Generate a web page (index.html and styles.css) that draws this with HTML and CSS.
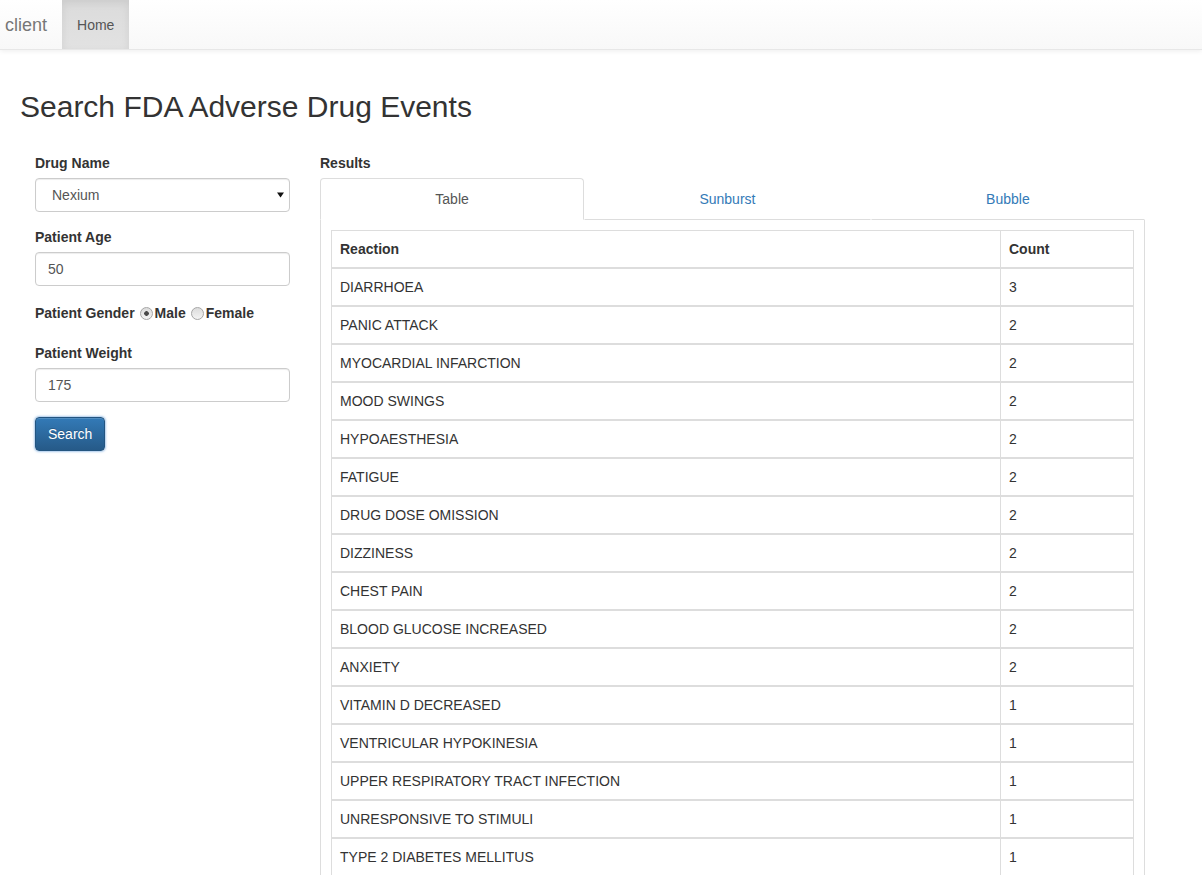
FILE: index.html
```html
<!DOCTYPE html>
<html lang="en">
<head>
<meta charset="utf-8">
<title>Search FDA Adverse Drug Events</title>
<link rel="stylesheet" href="styles.css">
</head>
<body>
<nav class="navbar">
  <span class="brand">client</span>
  <a class="nav-link active" href="#">Home</a>
</nav>
<main class="page">
  <h2 class="title">Search FDA Adverse Drug Events</h2>
  <div class="row">
    <form class="form-col">
      <div class="form-group">
        <label class="control-label">Drug Name</label>
        <div class="select-wrap">
          <select class="form-control select">
            <option>Nexium</option>
          </select>
          <svg class="caret" width="7" height="6" viewBox="0 0 7 6"><path d="M0 0.5H7L3.5 5.5Z" fill="#111"/></svg>
        </div>
      </div>
      <div class="form-group">
        <label class="control-label">Patient Age</label>
        <input class="form-control" type="text" value="50">
      </div>
      <div class="form-group gender">
        <span class="control-label">Patient Gender</span><input class="radio" type="radio" name="g" checked><span class="control-label">Male</span><input class="radio" type="radio" name="g"><span class="control-label">Female</span>
      </div>
      <div class="form-group">
        <label class="control-label">Patient Weight</label>
        <input class="form-control" type="text" value="175">
      </div>
      <button class="btn-primary" type="button">Search</button>
    </form>
    <section class="results-col">
      <div class="control-label results-label">Results</div>
      <ul class="tabs">
        <li class="tab active"><a href="#">Table</a></li>
        <li class="tab"><a href="#">Sunburst</a></li>
        <li class="tab"><a href="#">Bubble</a></li>
      </ul>
      <div class="tab-content">
        <table class="table">
          <thead>
            <tr><th>Reaction</th><th class="col-count">Count</th></tr>
          </thead>
          <tbody><tr><td>DIARRHOEA</td><td>3</td></tr></tbody>
          <tbody><tr><td>PANIC ATTACK</td><td>2</td></tr></tbody>
          <tbody><tr><td>MYOCARDIAL INFARCTION</td><td>2</td></tr></tbody>
          <tbody><tr><td>MOOD SWINGS</td><td>2</td></tr></tbody>
          <tbody><tr><td>HYPOAESTHESIA</td><td>2</td></tr></tbody>
          <tbody><tr><td>FATIGUE</td><td>2</td></tr></tbody>
          <tbody><tr><td>DRUG DOSE OMISSION</td><td>2</td></tr></tbody>
          <tbody><tr><td>DIZZINESS</td><td>2</td></tr></tbody>
          <tbody><tr><td>CHEST PAIN</td><td>2</td></tr></tbody>
          <tbody><tr><td>BLOOD GLUCOSE INCREASED</td><td>2</td></tr></tbody>
          <tbody><tr><td>ANXIETY</td><td>2</td></tr></tbody>
          <tbody><tr><td>VITAMIN D DECREASED</td><td>1</td></tr></tbody>
          <tbody><tr><td>VENTRICULAR HYPOKINESIA</td><td>1</td></tr></tbody>
          <tbody><tr><td>UPPER RESPIRATORY TRACT INFECTION</td><td>1</td></tr></tbody>
          <tbody><tr><td>UNRESPONSIVE TO STIMULI</td><td>1</td></tr></tbody>
          <tbody><tr><td>TYPE 2 DIABETES MELLITUS</td><td>1</td></tr></tbody>
        </table>
      </div>
    </section>
  </div>
</main>
</body>
</html>
```
FILE: styles.css
```css
* { box-sizing: border-box; }

html, body {
  margin: 0;
  padding: 0;
  background: #fff;
}

body {
  font-family: "Liberation Sans", Arial, Helvetica, sans-serif;
  font-size: 14px;
  line-height: 20px;
  color: #333;
}

/* navbar */
.navbar {
  display: flex;
  align-items: stretch;
  height: 50px;
  border-bottom: 1px solid #e7e7e7;
  background: linear-gradient(to bottom, #ffffff 0%, #f8f8f8 100%);
  box-shadow: inset 0 1px 0 rgba(255,255,255,.15), 0 1px 5px rgba(0,0,0,.075);
}

.brand {
  display: flex;
  align-items: center;
  padding: 0 15px 0 5px;
  font-size: 18px;
  line-height: 20px;
  color: #777;
}

.nav-link {
  display: flex;
  align-items: center;
  padding: 0 15px;
  color: #777;
  text-decoration: none;
}

.nav-link.active {
  color: #555;
  background: linear-gradient(to bottom, #dbdbdb 0%, #e2e2e2 100%);
  box-shadow: inset 0 3px 9px rgba(0,0,0,.075);
}

/* page */
.page {
  padding: 0 20px;
}

.title {
  margin: 40px 0 30px;
  font-size: 30px;
  font-weight: 500;
  line-height: 33px;
  color: #333;
}

.row {
  display: flex;
  align-items: flex-start;
}

.form-col {
  width: 270px;
  padding-left: 15px;
  margin: 0;
}

.results-col {
  width: 825px;
  margin-left: 30px;
}

.control-label {
  display: block;
  font-weight: bold;
  margin-bottom: 5px;
  color: #333;
}

.form-group {
  margin-bottom: 15px;
}

.form-control {
  display: block;
  width: 100%;
  height: 34px;
  padding: 6px 12px;
  font-family: inherit;
  font-size: 14px;
  line-height: 20px;
  color: #555;
  background: #fff;
  border: 1px solid #ccc;
  border-radius: 4px;
  box-shadow: inset 0 1px 1px rgba(0,0,0,.075);
  margin: 0;
}

.select-wrap {
  position: relative;
}

.select {
  -webkit-appearance: none;
  appearance: none;
  padding-left: 16px;
}

.caret {
  position: absolute;
  right: 6px;
  top: 14px;
}

.gender {
  display: flex;
  align-items: center;
  height: 24px;
  margin-bottom: 18px;
}

.gender .control-label {
  margin-bottom: 0;
  display: inline;
}

.radio {
  -webkit-appearance: none;
  appearance: none;
  width: 13px;
  height: 13px;
  margin: 0 2px 0 5px;
  border: 1px solid #a6a6a6;
  border-radius: 50%;
  background: linear-gradient(to bottom, #dcdcdc, #f4f4f4);
}

.radio:checked {
  background: radial-gradient(circle, #4a4a4a 0, #4a4a4a 2px, rgba(74,74,74,0) 2.6px), linear-gradient(to bottom, #dcdcdc, #f4f4f4);
}

.btn-primary {
  display: inline-block;
  height: 34px;
  padding: 6px 12px;
  font-family: inherit;
  font-size: 14px;
  line-height: 20px;
  color: #fff;
  background: linear-gradient(to bottom, #337ab7 0%, #265a88 100%);
  border: 1px solid #245580;
  border-radius: 4px;
  box-shadow: inset 0 1px 0 rgba(255,255,255,.15), 0 0 2px 1px rgba(102,160,220,.55);
  text-shadow: 0 -1px 0 rgba(0,0,0,.2);
}

/* tabs */
.tabs {
  display: table;
  width: 100%;
  margin: 0;
  padding: 0;
  list-style: none;
}

.tab {
  display: table-cell;
  width: 1%;
}

.tab a {
  display: block;
  padding: 10px 15px;
  text-align: center;
  color: #337ab7;
  text-decoration: none;
  border: 1px solid transparent;
  border-bottom-color: #ddd;
  border-radius: 4px 4px 0 0;
}

.tab.active a {
  color: #555;
  background: #fff;
  border-color: #ddd #ddd #fff;
}

.tab-content {
  border: 1px solid #ddd;
  border-top: 0;
  padding: 10px;
}

/* table */
.table {
  width: 100%;
  border-collapse: collapse;
  border-spacing: 0;
  border: 1px solid #ddd;
}

.table th,
.table td {
  padding: 8px;
  line-height: 20px;
  text-align: left;
  vertical-align: top;
  border: 1px solid #ddd;
}

.table th {
  font-weight: bold;
  border-bottom-width: 2px;
}

.table tbody + tbody {
  border-top: 2px solid #ddd;
}

.col-count {
  width: 133px;
}
```
